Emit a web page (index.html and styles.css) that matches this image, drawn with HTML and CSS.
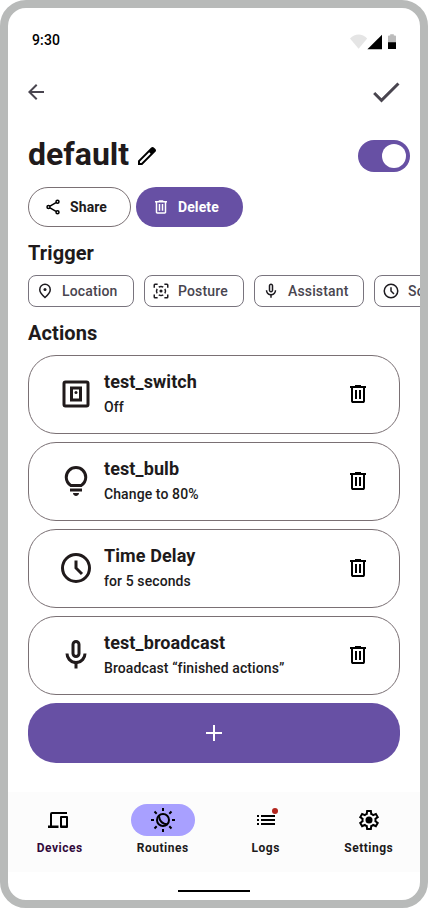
FILE: index.html
```html
<!DOCTYPE html>
<html lang="en">
<head>
<meta charset="utf-8">
<title>Routine</title>
<link rel="stylesheet" href="styles.css">
</head>
<body>
<svg class="defs" width="0" height="0">
  <symbol id="trash" viewBox="0 0 24 24"><path d="M7 21q-.825 0-1.413-.587Q5 19.825 5 19V6H4V4h5V3h6v1h5v2h-1v13q0 .825-.587 1.413Q17.825 21 17 21ZM17 6H7v13h10ZM9 17h2V8H9Zm4 0h2V8h-2Z"/></symbol>
  <symbol id="mic" viewBox="0 0 24 24"><path d="M12 14q-1.250 0-2.125-.875T9 11V5q0-1.250.875-2.125T12 2q1.250 0 2.125.875T15 5v6q0 1.250-.875 2.125T12 14Zm-1 7v-3.075q-2.600-.35-4.300-2.325Q5 13.625 5 11h2q0 2.075 1.463 3.537Q9.925 16 12 16t3.538-1.463Q17 13.075 17 11h2q0 2.625-1.700 4.600-1.700 1.975-4.300 2.325V21Zm1-9q.425 0 .713-.288Q13 11.425 13 11V5q0-.425-.287-.713Q12.425 4 12 4t-.712.287Q11 4.575 11 5v6q0 .425.288.712Q11.575 12 12 12Z"/></symbol>
  <symbol id="clock" viewBox="0 0 24 24"><path d="M15.300 16.700 16.700 15.300 13 11.600V7h-2v5.400Z"/><circle cx="12" cy="12" r="9" fill="none" stroke="currentColor" stroke-width="2"/></symbol>
</svg>
<div class="phone">
  <div class="status">
    <span class="time">9:30</span>
    <svg class="signals" width="46" height="16" viewBox="0 0 46 16">
      <path fill="#e5e5e5" d="M0 4.400C5-.8 12.200-.8 17.200 4.400L8.600 14.800Z"/>
      <path d="M17.400 15.200 32 .8v14.400Z"/>
      <path fill="#bbb" d="M38 9V2.500q0-.9.900-.9h1.300V.3h3.600v1.300h1.300q.9 0 .9.900V9Z"/>
      <path d="M38 8.300h8v6.700h-8Z"/>
    </svg>
  </div>
  <div class="appbar">
    <svg class="i24" viewBox="0 0 24 24"><path d="M20 11H7.830l5.590-5.590L12 4l-8 8 8 8 1.410-1.410L7.830 13H20z"/></svg>
    <svg class="i36" viewBox="0 0 24 24"><path d="M9 16.170 4.830 12l-1.420 1.410L9 19 21 7l-1.410-1.410z"/></svg>
  </div>
  <div class="title-row">
    <h1>default</h1>
    <svg class="i24" viewBox="0 0 24 24"><path fill-rule="evenodd" d="M3 21v-4.250L16.200 3.575q.6-.55 1.400-.55t1.425.6L20.400 5q.6.575.6 1.400t-.6 1.400L7.250 21ZM5 19h1.400l9.250-9.225-1.425-1.425L5 17.600Z"/></svg>
    <div class="switch"><span class="knob"></span></div>
  </div>
  <div class="buttons">
    <div class="btn outlined"><svg class="i18" viewBox="0 0 24 24"><g fill="none" stroke="currentColor" stroke-width="2"><circle cx="18" cy="5" r="2"/><circle cx="6" cy="12" r="2"/><circle cx="18" cy="19" r="2"/><path d="m8 10.800 8-4.700M8 13.200l8 4.700"/></g></svg><span>Share</span></div>
    <div class="btn filled"><svg class="i18"><use href="#trash"/></svg><span>Delete</span></div>
  </div>
  <h2>Trigger</h2>
  <div class="chips">
    <div class="chip location"><svg class="i18" viewBox="0 0 24 24"><circle cx="12" cy="10" r="2"/><path d="M12 19.350q3.050-2.800 4.525-5.088Q18 11.975 18 10.200q0-2.725-1.738-4.463Q14.525 4 12 4 9.475 4 7.737 5.737 6 7.475 6 10.200q0 1.775 1.475 4.062Q8.950 16.550 12 19.350ZM12 22q-4.025-3.425-6.012-6.362Q4 12.700 4 10.200q0-3.750 2.413-5.975Q8.825 2 12 2t5.588 2.225Q20 6.450 20 10.200q0 2.500-1.987 5.438Q16.025 18.575 12 22Z"/></svg><span>Location</span></div>
    <div class="chip posture"><svg class="i18" viewBox="0 0 24 24"><circle cx="12" cy="12" r="2.100"/><g fill="none" stroke="currentColor" stroke-width="2"><path d="M3 7.500V4q0-1 1-1h3.500M16.500 3H20q1 0 1 1v3.500M21 16.500V20q0 1-1 1h-3.500M7.500 21H4q-1 0-1-1v-3.500"/><path d="M9 6.800a6 6 0 0 1 6 0M17.200 9a6 6 0 0 1 0 6M15 17.200a6 6 0 0 1-6 0M6.800 15a6 6 0 0 1 0-6"/></g></svg><span>Posture</span></div>
    <div class="chip assistant"><svg class="i18"><use href="#mic"/></svg><span>Assistant</span></div>
    <div class="chip schedule"><svg class="i18"><use href="#clock"/></svg><span>Schedule</span></div>
  </div>
  <h2>Actions</h2>
  <div class="cards">
    <div class="card">
      <svg class="i36" viewBox="0 0 24 24"><rect x="4" y="4" width="16" height="16" rx="1" fill="none" stroke="currentColor" stroke-width="2"/><rect x="9" y="8" width="6" height="8" fill="none" stroke="currentColor" stroke-width="2"/><circle cx="12" cy="11" r="1"/></svg>
      <div class="info"><h3>test_switch</h3><p>Off</p></div>
      <svg class="i24 del"><use href="#trash"/></svg>
    </div>
    <div class="card">
      <svg class="i36" viewBox="0 0 24 24"><path d="M12 22q-.825 0-1.412-.587Q10 20.825 10 20h4q0 .825-.587 1.413Q12.825 22 12 22Zm-4-3v-2h8v2Zm.25-3q-1.725-1.025-2.737-2.750Q4.500 11.525 4.500 9.500q0-3.125 2.188-5.312Q8.875 2 12 2q3.125 0 5.312 2.188Q19.500 6.375 19.500 9.500q0 2.025-1.012 3.750-1.013 1.725-2.738 2.750Zm.6-2h6.300q1.125-.8 1.738-1.975.612-1.175.612-2.525 0-2.300-1.600-3.900T12 4Q9.700 4 8.100 5.600T6.500 9.500q0 1.350.613 2.525Q7.725 13.200 8.850 14Z"/></svg>
      <div class="info"><h3>test_bulb</h3><p>Change to 80%</p></div>
      <svg class="i24 del"><use href="#trash"/></svg>
    </div>
    <div class="card">
      <svg class="i36"><use href="#clock"/></svg>
      <div class="info"><h3>Time Delay</h3><p>for 5 seconds</p></div>
      <svg class="i24 del"><use href="#trash"/></svg>
    </div>
    <div class="card">
      <svg class="i36"><use href="#mic"/></svg>
      <div class="info"><h3>test_broadcast</h3><p>Broadcast “finished actions”</p></div>
      <svg class="i24 del"><use href="#trash"/></svg>
    </div>
    <div class="add"><svg width="16" height="16" viewBox="0 0 16 16"><path d="M7 0h2v7h7v2H9v7H7V9H0V7h7z"/></svg></div>
  </div>
  <div class="nav">
    <div class="tab devices"><div class="pill"><svg class="i24" viewBox="0 0 24 24"><path d="M0 17.500h2V6q0-2 2-2h15v2H4v11.500h6.500V20H0ZM13 8h6q1 0 1 1v10q0 1-1 1h-6q-1 0-1-1V9q0-1 1-1Zm1 2v7.500h4V10Z"/></svg></div><span>Devices</span></div>
    <div class="tab active"><div class="pill"><svg class="i24" viewBox="0 0 24 24"><g fill="none" stroke="currentColor" stroke-width="2"><path d="M12 0v3M12 21v3M0 12h3M21 12h3M3.500 3.500l2.200 2.200M18.300 18.300l2.200 2.200M20.500 3.500l-2.200 2.200M5.700 18.300l-2.200 2.200"/><circle cx="12" cy="12" r="6"/><path d="M8 8q.5 7.500 8.500 8.500"/></g></svg></div><span>Routines</span></div>
    <div class="tab"><div class="pill"><svg class="i24" viewBox="0 0 24 24"><path d="M3 7h2v2H3zM7 7h14v2H7zM3 11h2v2H3zM7 11h14v2H7zM3 15h2v2H3zM7 15h14v2H7z"/></svg><i class="badge"></i></div><span>Logs</span></div>
    <div class="tab settings"><div class="pill"><svg class="i24" viewBox="0 0 24 24"><circle cx="12" cy="12" r="3.500"/><path d="m9.250 22-.4-3.200q-.325-.125-.612-.3-.288-.175-.563-.375L4.700 19.375l-2.750-4.750 2.575-1.950Q4.500 12.500 4.500 12.337v-.675q0-.162.025-.337L1.950 9.375l2.750-4.750 2.975 1.250q.275-.2.575-.375.3-.175.600-.3l.4-3.200h5.500l.4 3.200q.325.125.613.3.287.175.562.375l2.975-1.250 2.750 4.750-2.575 1.950q.025.175.025.337v.675q0 .163-.05.338l2.575 1.950-2.750 4.750-2.950-1.250q-.275.2-.575.375-.3.175-.6.3l-.4 3.200Zm1.750-2h1.975l.35-2.650q.775-.2 1.438-.587.662-.388 1.212-.938l2.475 1.025.975-1.700-2.150-1.625q.125-.35.175-.737.05-.388.05-.788t-.05-.787q-.05-.388-.175-.738l2.150-1.625-.975-1.700-2.475 1.050q-.55-.575-1.212-.963-.663-.387-1.438-.587L13 4h-1.975l-.35 2.650q-.775.2-1.437.587-.663.388-1.213.938L5.550 7.150l-.975 1.700 2.150 1.600q-.125.375-.175.750-.05.375-.05.800 0 .4.050.775t.175.750l-2.150 1.625.975 1.700 2.475-1.050q.55.575 1.213.962.662.388 1.437.588Z" fill-rule="evenodd"/></svg></div><span>Settings</span></div>
  </div>
  <div class="home"></div>
</div>
</body>
</html>
```

FILE: styles.css
```css
* { box-sizing: border-box; margin: 0; }
body { background: #fff; font-family: Roboto, sans-serif; color: #201a1b; overflow: hidden; }
svg { display: block; flex: none; fill: currentColor; overflow: visible; }
.defs { position: absolute; }
.i18 { width: 18px; height: 18px; }
.i24 { width: 24px; height: 24px; }
.i36 { width: 36px; height: 36px; }
.phone { width: 428px; height: 908px; border: 8px solid #b8bab9; border-radius: 26px; overflow: hidden; display: flex; flex-direction: column; }
.status { height: 64px; padding: 0 24px; display: flex; align-items: center; justify-content: space-between; color: #000; }
.time { font-size: 14px; font-weight: 500; letter-spacing: .14px; }
.signals { margin-top: 3px; }
.appbar { height: 40px; padding: 0 16px; display: flex; align-items: center; justify-content: space-between; color: #49454f; }
.title-row { height: 40px; margin-top: 24px; padding: 0 10px 0 20px; display: flex; align-items: center; }
h1 { font-size: 32px; line-height: 40px; font-weight: 700; width: 107px; margin-top: -5px; white-space: nowrap; }
.title-row svg { color: #000; }
.switch { margin-left: auto; width: 52px; height: 32px; border-radius: 16px; background: #6750a4; padding: 4px; display: flex; justify-content: flex-end; }
.knob { width: 24px; height: 24px; border-radius: 50%; background: #fff; }
.buttons { display: flex; gap: 5px; margin: 11px 0 0 20px; }
.btn { height: 40px; border-radius: 20px; display: flex; align-items: center; gap: 8px; padding-left: 16px; font-size: 14px; font-weight: 700; letter-spacing: .1px; }
.outlined { width: 103px; border: 1px solid #7a7074; padding-left: 15px; }
.outlined svg { color: #000; }
.filled { width: 107px; background: #6750a4; color: #fff; }
h2 { font-size: 20px; font-weight: 700; line-height: 24px; letter-spacing: .1px; margin: 14px 0 10px 20px; }
.chips { display: flex; gap: 10px; padding-left: 20px; overflow: hidden; }
.chip { flex: none; height: 32px; border: 1px solid #79747e; border-radius: 8px; display: flex; align-items: center; gap: 8px; padding-left: 7px; font-size: 14px; font-weight: 500; letter-spacing: .15px; color: #49454f; }
.chip svg { color: #1d1b20; }
.location { width: 106px; }
.posture { width: 100px; }
.assistant { width: 110px; }
.schedule { width: 112px; }
.cards { padding: 0 20px; display: flex; flex-direction: column; gap: 8px; }
.card { height: 79px; border: 1px solid #7a7074; border-radius: 28px; display: flex; align-items: center; padding: 0 29px 1px; }
.info { margin-left: 10px; flex: 1; }
h3 { font-size: 18px; font-weight: 700; line-height: 24px; letter-spacing: .1px; margin-top: -1px; }
.card p { font-size: 14px; font-weight: 500; line-height: 20px; margin-top: 3px; letter-spacing: .1px; }
.del { color: #000; }
.add { height: 60px; border-radius: 28px; background: #6750a4; color: #fff; display: flex; align-items: center; justify-content: center; }
.nav { margin-top: 29px; height: 80px; background: #fcfcfc; display: grid; grid-template-columns: repeat(4, 1fr); }
.tab { display: flex; flex-direction: column; align-items: center; padding-top: 12px; font-size: 12px; line-height: 16px; font-weight: 700; letter-spacing: .5px; }
.pill { width: 64px; height: 32px; border-radius: 16px; margin-bottom: 4px; display: flex; align-items: center; justify-content: center; color: #000; position: relative; }
.active .pill { background: #a8a0ff; }
.settings .pill { width: 65px; }
.devices { color: #31093b; }
.tab span { padding-left: .5px; }
.badge { position: absolute; left: 38px; top: 4px; width: 6px; height: 6px; border-radius: 50%; background: #b3261e; }
.home { width: 72px; height: 2px; background: #000; margin: 18px auto 0; }
```
